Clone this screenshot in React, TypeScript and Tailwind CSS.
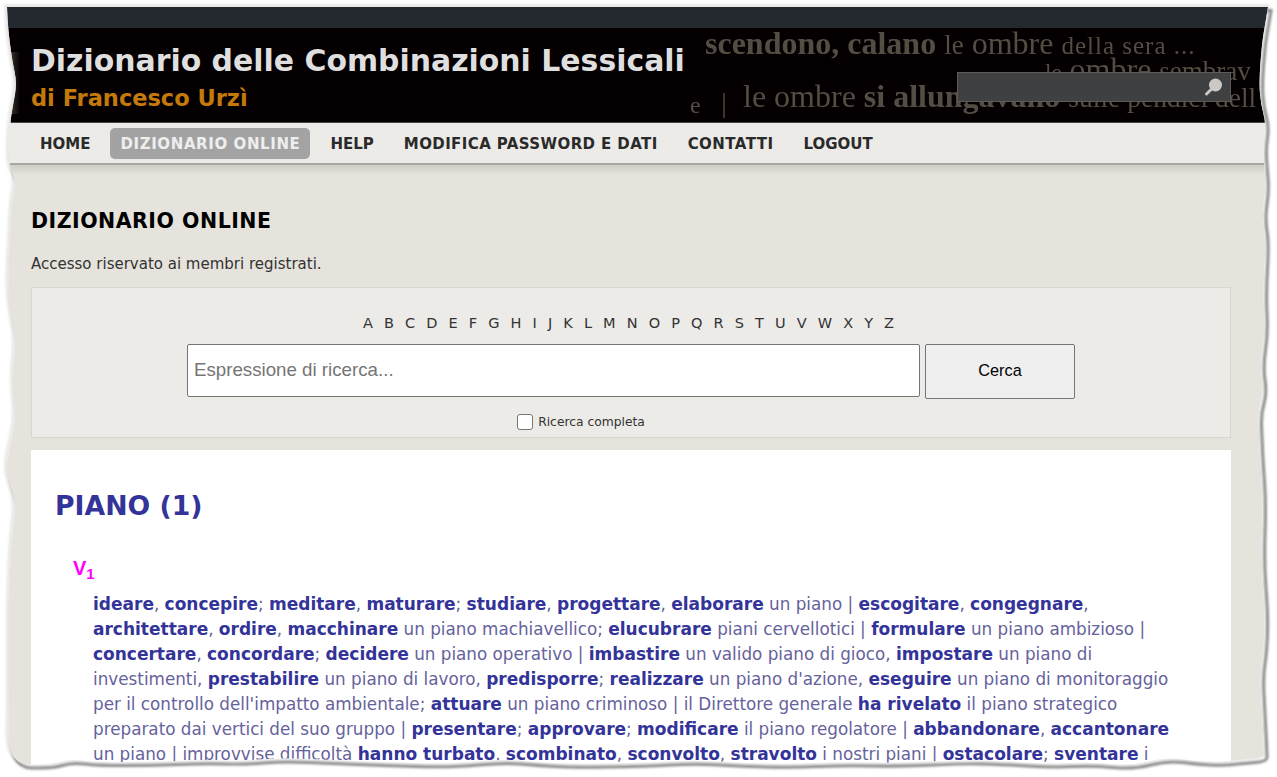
import React from "react";

const navItems = [
  { label: "HOME", className: "px-[10px] h-[31px] leading-[32px]" },
  { label: "DIZIONARIO ONLINE", className: "px-[10px] h-[31px] leading-[32px] tracking-[0.6px] rounded-[5px] bg-[#a3a3a3] text-[#eeeeee]" },
  { label: "HELP", className: "px-[10px] h-[31px] leading-[32px]" },
  { label: "MODIFICA PASSWORD E DATI", className: "px-[10px] h-[31px] leading-[32px] tracking-[0.4px]" },
  { label: "CONTATTI", className: "px-[10px] h-[31px] leading-[32px] tracking-[0.45px]" },
  { label: "LOGOUT", className: "px-[10px] h-[31px] leading-[32px]" },
];
const letters = "ABCDEFGHIJKLMNOPQRSTUVWXYZ".split("");

// **bold** segments
const lines = [
  "**ideare**, **concepire**; **meditare**, **maturare**; **studiare**, **progettare**, **elaborare** un piano | **escogitare**, **congegnare**,",
  "**architettare**, **ordire**, **macchinare** un piano machiavellico; **elucubrare** piani cervellotici | **formulare** un piano ambizioso |",
  "**concertare**, **concordare**; **decidere** un piano operativo | **imbastire** un valido piano di gioco, **impostare** un piano di",
  "investimenti, **prestabilire** un piano di lavoro, **predisporre**; **realizzare** un piano d'azione, **eseguire** un piano di monitoraggio",
  "per il controllo dell'impatto ambientale; **attuare** un piano criminoso | il Direttore generale **ha rivelato** il piano strategico",
  "preparato dai vertici del suo gruppo | **presentare**; **approvare**; **modificare** il piano regolatore | **abbandonare**, **accantonare**",
  "un piano | improvvise difficoltà **hanno turbato**, **scombinato**, **sconvolto**, **stravolto** i nostri piani | **ostacolare**; **sventare** i",
];

function Line({ text }: { text: string }) {
  return (
    <div className="whitespace-pre">
      {text.split("**").map((part, i) =>
        i % 2 ? (
          <b key={i} className="font-bold text-[17px] text-[#333399]">
            {part}
          </b>
        ) : (
          <span key={i}>{part}</span>
        )
      )}
    </div>
  );
}

const edgePoints = [
  [7, 7], [7, 7], [7, 7], [640, 7], [1268, 7], [1268, 7], [1268, 7], [1265, 25], [1262, 43], [1259, 82], [1261, 105], [1266, 123], [1263, 145], [1264, 163], [1266, 187],
  [1262, 215], [1266, 240], [1263, 290], [1265, 330], [1260, 363], [1264, 390], [1258, 410], [1259, 435], [1260, 457], [1263, 500],
  [1261, 560], [1265, 610], [1264, 647], [1260, 673], [1262, 710], [1264, 750], [1264, 758], [1240, 760], [1220, 762], [1195, 761],
  [1165, 757], [1130, 766], [1090, 762], [1050, 764], [1000, 761], [960, 760], [900, 763], [840, 762], [790, 764], [740, 763],
  [693, 760], [640, 763], [570, 764], [535, 762], [500, 759], [450, 764], [380, 762], [330, 760], [280, 758], [240, 761], [200, 760],
  [150, 762], [94, 762], [69, 759], [49, 765], [8, 764], [9, 700], [9, 640], [9, 597], [11, 547], [16, 503], [10, 485], [6, 467],
  [10, 445], [16, 420], [12, 380], [16, 340], [10, 310], [8, 280], [10, 240], [12, 200], [16, 180], [8, 163], [10, 123], [13, 105],
  [17, 83], [12, 60], [8, 28],
];

// rounds the tear through the midpoints of the points
function smoothEdge(points: number[][]) {
  const mid = (a: number[], b: number[]) => `${(a[0] + b[0]) / 2} ${(a[1] + b[1]) / 2}`;
  let d = `M${mid(points[points.length - 1], points[0])}`;
  points.forEach((p, i) => {
    d += ` Q${p[0]} ${p[1]} ${mid(p, points[(i + 1) % points.length])}`;
  });
  return d + " Z";
}

const tornEdge = smoothEdge(edgePoints);

function TornMask() {
  return (
    <svg className="absolute left-0 top-0 pointer-events-none" width="1277" height="777" viewBox="0 0 1277 777">
      <defs>
        <filter id="blur" x="-5%" y="-5%" width="110%" height="110%">
          <feGaussianBlur stdDeviation="1.3" />
        </filter>
        <clipPath id="outside">
          <path clipRule="evenodd" d={`M0 0H1277V777H0Z ${tornEdge}`} />
        </clipPath>
      </defs>
      <path fill="#fff" fillRule="evenodd" d={`M0 0H1277V777H0Z ${tornEdge}`} />
      <g clipPath="url(#outside)">
        <path d={tornEdge} fill="none" stroke="#e8e8e8" strokeWidth="4" filter="url(#blur)" transform="translate(-1 -1)" />
        <path d={tornEdge} fill="none" stroke="#8a8a8a" strokeWidth="3" filter="url(#blur)" transform="translate(3 3.5)" />
      </g>
    </svg>
  );
}

function HeaderImage() {
  return (
    <div className="relative w-[585px] h-full overflow-hidden blur-[0.4px] font-['Liberation_Serif',serif] text-[#544d43] whitespace-pre">
      <div className="absolute left-[20px] top-[-3px] text-[32px] leading-[36px]">
        <b>scendono, calano</b> <span className="text-[27px]">le</span> ombre{" "}
        <span className="text-[25px] tracking-[1px]">della sera ...</span>
      </div>
      <div className="absolute left-[360px] top-[23px] text-[32px] leading-[36px]">
        <span className="text-[23px]">le</span> ombre <span className="text-[27px]">sembrav</span>
      </div>
      <div className="absolute left-[58px] top-[50px] text-[32px] leading-[36px]">
        le ombre <b>si allungavano</b> <span className="text-[27.5px]">sulle pendici dell</span>
      </div>
      <div className="absolute left-[38px] top-[65px] w-[2px] h-[25px] bg-[#3d3328]" />
      <div className="absolute left-[5px] top-[62px] text-[24px] leading-[30px]">e</div>
    </div>
  );
}

export default function App() {
  return (
    <div className="relative w-[1277px] h-[777px] overflow-hidden bg-white font-['DejaVu_Sans',sans-serif]">
      <div className="pt-[7px] pl-[5px] w-[1270px] h-full">
        <div className="h-[21px] bg-[#23292e]" />
        <header className="h-[95px] bg-[#040001] border-b border-[#4b4743] flex justify-between relative">
          <div className="absolute left-[3px] top-[24px] w-[12px] h-[62px] bg-gradient-to-r from-[#4a4238] to-transparent" />
          <div className="pl-[26px] pt-[15px]">
            <h1 className="text-[29.9px] leading-[36px] font-bold text-[#dfdfdf] whitespace-nowrap">Dizionario delle Combinazioni Lessicali</h1>
            <p className="text-[22.5px] leading-[32px] mt-[3px] font-bold text-[#c47a0a]">di Francesco Urzì</p>
          </div>
          <HeaderImage />
          <div className="absolute left-[952px] top-[44px] w-[274px] h-[30px] bg-[#3f4042] border border-[#5f5a55] flex items-center justify-end pr-[6px]">
            <svg width="20" height="20" viewBox="0 0 20 20">
              <circle cx="11.5" cy="8" r="6.5" fill="#cbc9c3" />
              <path d="M7 12.5 L2.5 17" stroke="#cbc9c3" strokeWidth="3" strokeLinecap="round" />
            </svg>
          </div>
        </header>
        <nav className="h-[42px] bg-[#edebe7] border-b-2 border-[#a9a8a3] flex items-center pl-[25px] gap-[10px] text-[15px] font-bold text-[#2a2a2a]">
          {navItems.map((item) => (
            <a key={item.label} href="#" className={item.className}>
              {item.label}
            </a>
          ))}
        </nav>
        <div className="h-[10px] bg-gradient-to-b from-[#cfcdc5] to-[#e6e3dc]" />
        <div className="bg-[#e6e3dc] h-full pl-[26px] pr-[39px]">
          <h2 className="pt-[34px] text-[20.5px] tracking-[0.5px] leading-[24px] font-bold text-black">DIZIONARIO ONLINE</h2>
          <p className="mt-[21px] text-[15px] leading-[20px] text-[#333]">Accesso riservato ai membri registrati.</p>
          <section className="mt-[13px] h-[151px] bg-[#edebe7] border border-[#d8d6cf] flex flex-col items-center pt-[26px]">
            <div className="flex gap-[11.1px] mr-[5px] text-[14.5px] leading-[18px] text-[#333]">
              {letters.map((l) => (
                <a key={l} href="#">
                  {l}
                </a>
              ))}
            </div>
            <form className="flex gap-[5px] mt-[12px] font-['Liberation_Sans',sans-serif]">
              <input
                placeholder="Espressione di ricerca..."
                className="w-[733px] h-[53px] bg-white border border-[#767676] rounded-[2px] px-[6px] pb-[2px] text-[18.72px] placeholder:text-[#757575]"
              />
              <button type="button" className="w-[150px] h-[55px] pb-[2px] bg-[#efefef] border border-[#767676] rounded-[2px] text-[16.3px] text-black">
                Cerca
              </button>
            </form>
            <label className="flex items-center gap-[5px] mt-[14px] mr-[100px] text-[12.3px] leading-[18px] text-[#333]">
              <span className="w-[16px] h-[16px] bg-white border border-[#767676] rounded-[3px]" />
              Ricerca completa
            </label>
          </section>
          <section className="mt-[12px] bg-white h-[400px] pl-[25px] pt-[40px]">
            <h3 className="text-[26.7px] leading-[32px] font-bold text-[#333399] -ml-[1px]">PIANO (1)</h3>
            <div className="ml-[17px] mt-[34px] h-[24px] font-['Liberation_Sans',sans-serif] font-bold text-[20px] leading-[24px] text-[#ff00ff]">
              V<sub className="text-[15px] font-bold">1</sub>
            </div>
            <div className="ml-[37px] mt-[12px] text-[16.8px] leading-[25px] text-[#66629c]">
              {lines.map((l) => (
                <Line key={l} text={l} />
              ))}
            </div>
          </section>
        </div>
      </div>
      <TornMask />
    </div>
  );
}
